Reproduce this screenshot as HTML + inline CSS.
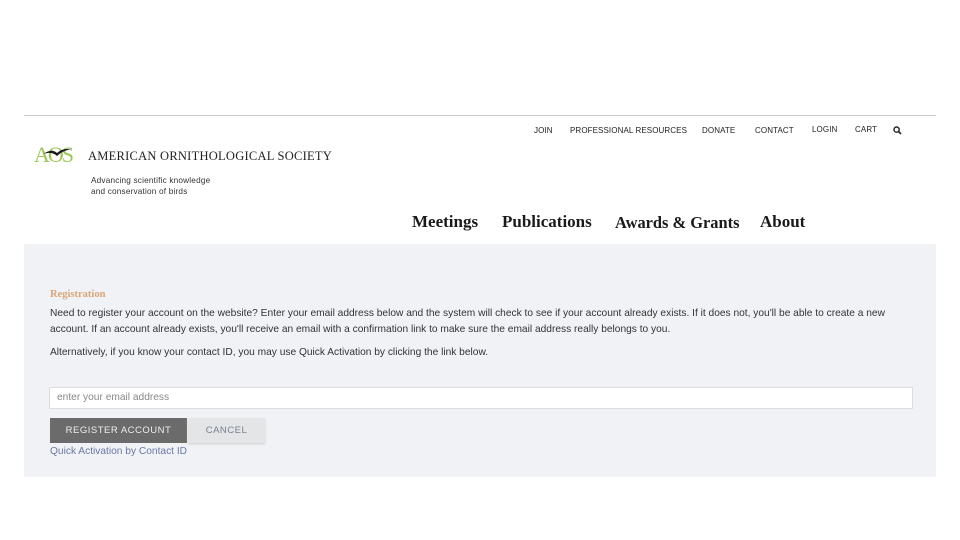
<!DOCTYPE html>
<html><head><style>
body{margin:0;width:960px;height:540px;background:#fff;position:relative;font-family:"Liberation Sans",sans-serif;overflow:hidden}
.a{position:absolute;white-space:nowrap}
.top{font-size:8px;color:#222;top:126px;letter-spacing:0.1px}
.nav{font-family:"Liberation Serif",serif;font-weight:bold;font-size:17px;color:#1a1a1a;top:212px}
.p{font-size:10.2px;color:#333}
</style></head><body>
<div class="a" style="left:24px;top:115px;width:912px;height:1px;background:#c8c8c8"></div>
<div class="a top" style="left:534px">JOIN</div>
<div class="a top" style="left:570px">PROFESSIONAL RESOURCES</div>
<div class="a top" style="left:702px">DONATE</div>
<div class="a top" style="left:755px">CONTACT</div>
<div class="a top" style="left:812px;top:125px">LOGIN</div>
<div class="a top" style="left:855px;top:125px">CART</div>
<svg class="a" style="left:893px;top:126px" width="9" height="9" viewBox="0 0 9 9"><circle cx="3.6" cy="3.6" r="2.6" fill="none" stroke="#222" stroke-width="1.4"/><path d="M5.5 5.5L8 8" stroke="#222" stroke-width="1.6"/></svg>
<div class="a" style="left:34px;top:142px;font-family:'Liberation Serif',serif;font-size:22px;color:#9bc65a;letter-spacing:-2px">AOS</div>
<svg class="a" style="left:42px;top:146px" width="30" height="12" viewBox="0 0 30 12"><path d="M1 8 Q10 2 15 7 Q20 2 29 3 Q20 5 15 10 Q10 5 1 8Z" fill="#1a1a1a"/></svg>
<div class="a" style="left:88px;top:149px;font-family:'Liberation Serif',serif;font-size:12.5px;color:#222;letter-spacing:0.25px">AMERICAN ORNITHOLOGICAL SOCIETY</div>
<div class="a" style="left:91px;top:176px;font-size:8.2px;color:#333;line-height:10.5px;letter-spacing:0.2px">Advancing scientific knowledge<br>and conservation of birds</div>
<div class="a nav" style="left:412px">Meetings</div>
<div class="a nav" style="left:502px">Publications</div>
<div class="a nav" style="left:615px;font-size:16.4px;top:213px">Awards &amp; Grants</div>
<div class="a nav" style="left:760px">About</div>
<div class="a" style="left:24px;top:244px;width:912px;height:233px;background:#f0f2f5"></div>
<div class="a" style="left:50px;top:289px;font-family:'Liberation Serif',serif;font-weight:bold;font-size:10.5px;color:#d9a57a">Registration</div>
<div class="a p" style="left:50px;top:306px;line-height:16px">Need to register your account on the website? Enter your email address below and the system will check to see if your account already exists. If it does not, you'll be able to create a new<br>account. If an account already exists, you'll receive an email with a confirmation link to make sure the email address really belongs to you.</div>
<div class="a p" style="left:50px;top:347px">Alternatively, if you know your contact ID, you may use Quick Activation by clicking the link below.</div>
<div class="a" style="left:49px;top:387px;width:862px;height:20px;background:#fff;border:1px solid #ddd"></div>
<div class="a" style="left:57px;top:392px;font-size:10.2px;color:#888">enter your email address</div>
<div class="a" style="left:50px;top:418px;width:137px;height:25px;background:#6b6b6b;color:#eee;font-size:9.5px;line-height:25px;text-align:center;letter-spacing:0.5px">REGISTER ACCOUNT</div>
<div class="a" style="left:188px;top:418px;width:77px;height:25px;background:#e4e5e7;color:#7a8090;font-size:9.5px;line-height:25px;text-align:center;letter-spacing:0.5px;box-shadow:0 1px 2px #ccc">CANCEL</div>
<div class="a" style="left:50px;top:446px;font-size:10.2px;color:#6a78a8">Quick Activation by Contact ID</div>
</body></html>
